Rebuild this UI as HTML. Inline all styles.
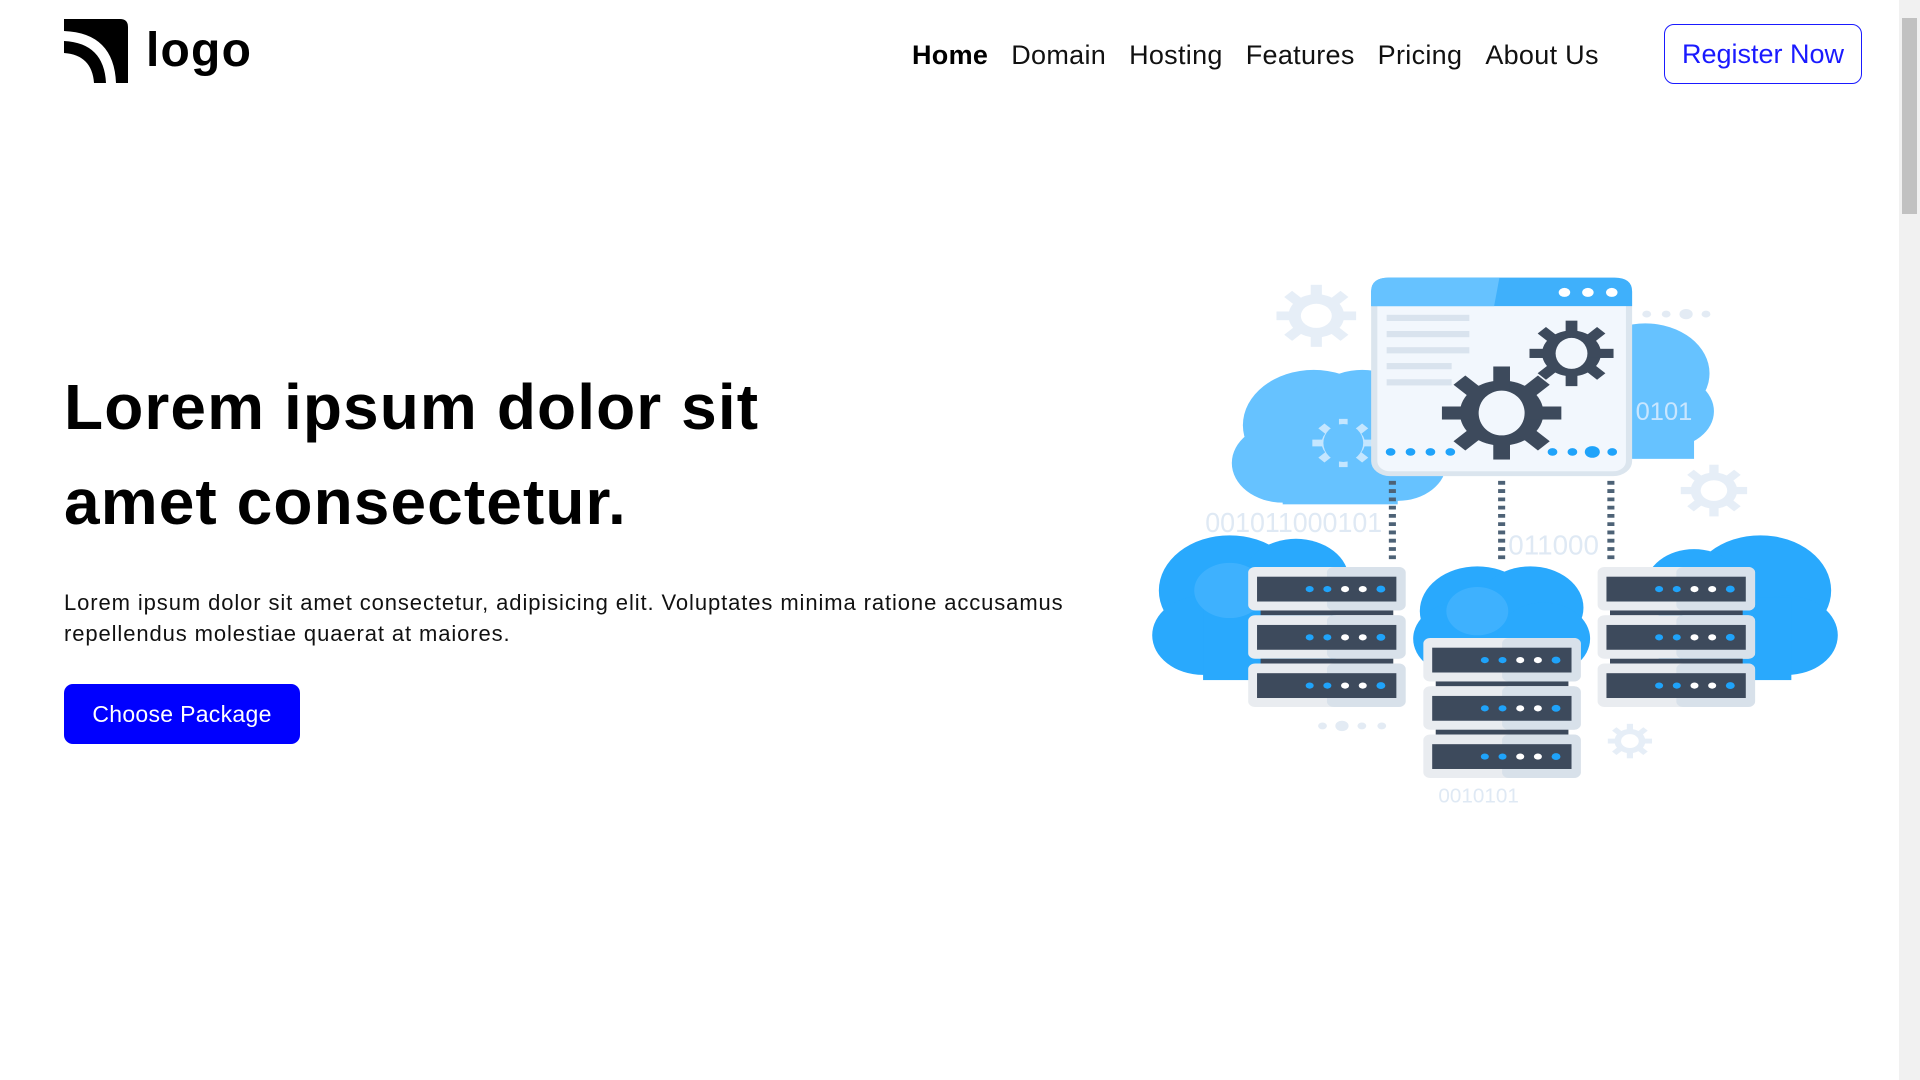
<!DOCTYPE html>
<html><head><meta charset="utf-8"><style>
*{margin:0;padding:0;box-sizing:border-box}
html,body{width:1920px;height:1080px;overflow:hidden;background:#fff;font-family:"Liberation Sans",sans-serif;color:#000}
.logo{position:absolute;left:64px;top:19px}
.logotxt{position:absolute;left:146px;top:23px;font-size:48px;font-weight:bold;letter-spacing:1.2px}
.nav{position:absolute;left:912px;top:40px;display:flex;font-size:27px;white-space:nowrap;letter-spacing:0.3px}
.nav span{margin-right:23px;color:#111}
.nav span.a{font-weight:bold;color:#000}
.reg{position:absolute;left:1664px;top:24px;width:198px;height:60px;border:1.5px solid #1a1aff;border-radius:10px;color:#1a1aff;font-size:27px;display:flex;align-items:center;justify-content:center}
h1{position:absolute;left:64px;top:360px;font-size:64px;line-height:95px;font-weight:bold;letter-spacing:1.1px}
p{position:absolute;left:64px;top:587px;font-size:22px;line-height:31px;color:#111;white-space:nowrap;letter-spacing:0.9px}
.btn{position:absolute;left:64px;top:684px;width:236px;height:60px;background:#0000ff;border-radius:9px;color:#fff;font-size:23px;display:flex;align-items:center;justify-content:center;letter-spacing:0.3px}
.sb{position:absolute;left:1899px;top:0;width:21px;height:1080px;background:#f1f1f1}
.sb i{position:absolute;left:3px;top:18px;width:15px;height:196px;background:#c1c1c1}
svg.ill{position:absolute;left:1150px;top:270px}
</style></head><body>
<svg class="logo" width="64" height="64" viewBox="0 0 64 64">
<path d="M0 0 H56 Q64 0 64 8 V64 H52 Q50 14 0 12 Z" fill="#000"/>
<path d="M0 22 Q40 24 42 64 H30 Q28 36 0 34 Z" fill="#000"/>
</svg>
<div class="logotxt">logo</div>
<div class="nav"><span class="a">Home</span><span>Domain</span><span>Hosting</span><span>Features</span><span>Pricing</span><span>About Us</span></div>
<div class="reg">Register Now</div>
<h1>Lorem ipsum dolor sit<br>amet consectetur.</h1>
<p>Lorem ipsum dolor sit amet consectetur, adipisicing elit. Voluptates minima ratione accusamus<br>repellendus molestiae quaerat at maiores.</p>
<div class="btn">Choose Package</div>
<div class="sb"><i></i></div>

<svg class="ill" width="690" height="540" viewBox="0 0 1560 1567" preserveAspectRatio="none">
<defs>
<g id="gear"><circle r="70"/><g id="t"><rect x="-14" y="-100" width="28" height="200"/><rect x="-100" y="-14" width="200" height="28"/></g><use href="#t" transform="rotate(45)"/></g>
</defs>
<g fill="#e6eef7">
<g transform="translate(376,133) scale(0.9)"><use href="#gear"/></g>
<g transform="translate(1275,640) scale(0.75)"><use href="#gear"/></g>
<g transform="translate(1085,1367) scale(0.5)"><use href="#gear"/></g>
</g>
<circle cx="376" cy="133" r="35" fill="#fff"/><circle cx="1275" cy="640" r="30" fill="#fff"/><circle cx="1085" cy="1367" r="20" fill="#fff"/>
<g fill="#e3ebf4"><circle cx="1123" cy="128" r="10"/><circle cx="1167" cy="128" r="10"/><circle cx="1212" cy="128" r="15"/><circle cx="1257" cy="128" r="10"/>
<circle cx="390" cy="1323" r="10"/><circle cx="434" cy="1323" r="15"/><circle cx="479" cy="1323" r="10"/><circle cx="524" cy="1323" r="10"/></g>
<g fill="#66c2ff">
<circle cx="370" cy="450" r="160"/><circle cx="480" cy="420" r="130"/><circle cx="300" cy="560" r="115"/><circle cx="560" cy="560" r="110"/><rect x="300" y="500" width="260" height="180"/>
<circle cx="1120" cy="300" r="145"/><circle cx="1170" cy="410" r="105"/><rect x="1080" y="300" width="150" height="248"/>
</g>
<g transform="translate(437,502) scale(0.7)" fill="#c4e6ff"><use href="#gear"/></g><ellipse cx="437" cy="502" rx="45" ry="55" fill="#66c2ff"/>
<g font-family="Liberation Sans,sans-serif" fill="#dfe9f4">
<text x="125" y="760" font-size="80" textLength="400" lengthAdjust="spacingAndGlyphs">001011000101</text>
<text x="810" y="825" font-size="80" textLength="205" lengthAdjust="spacingAndGlyphs">011000</text>
<text x="652" y="1545" font-size="58" textLength="182" lengthAdjust="spacingAndGlyphs">0010101</text>
<text x="1098" y="435" font-size="72" fill="#c8e6ff" textLength="128" lengthAdjust="spacingAndGlyphs">0101</text>
</g>
<rect x="507" y="29" width="576" height="562" rx="36" fill="#f2f7fd" stroke="#dbe5ee" stroke-width="14"/>
<path d="M540 22 H1050 Q1090 22 1090 62 V105 H500 V62 Q500 22 540 22Z" fill="#3fb0fb"/>
<path d="M540 22 H790 L778 105 H500 V62 Q500 22 540 22Z" fill="#66c2ff"/>
<g fill="#fff"><circle cx="937" cy="65" r="13"/><circle cx="990" cy="65" r="13"/><circle cx="1044" cy="65" r="13"/></g>
<g fill="#d9e3ee"><rect x="535" y="130" width="187" height="18"/><rect x="535" y="177" width="187" height="18"/><rect x="535" y="224" width="187" height="18"/><rect x="535" y="270" width="147" height="18"/><rect x="535" y="317" width="147" height="18"/></g>
<g fill="#3d4a5c">
<g transform="translate(795,415) scale(1.35)"><use href="#gear"/></g>
<g transform="translate(953,242) scale(0.95)"><use href="#gear"/></g>
</g>
<ellipse cx="795" cy="415" rx="52" ry="65" fill="#f2f7fd"/><ellipse cx="953" cy="242" rx="36" ry="45" fill="#f2f7fd"/>
<g fill="#1fa3fa"><circle cx="544" cy="528" r="11"/><circle cx="589" cy="528" r="11"/><circle cx="634" cy="528" r="11"/><circle cx="679" cy="528" r="11"/><circle cx="910" cy="528" r="11"/><circle cx="955" cy="528" r="11"/><circle cx="1000" cy="528" r="17"/><circle cx="1045" cy="528" r="11"/></g>
<g stroke="#4d6276" stroke-width="16" stroke-dasharray="11 13"><line x1="548" y1="612" x2="548" y2="852"/><line x1="795" y1="612" x2="795" y2="852"/><line x1="1042" y1="612" x2="1042" y2="852"/></g>
<g fill="#29a9fd">
<circle cx="180" cy="930" r="160"/><circle cx="330" cy="900" r="120"/><circle cx="120" cy="1060" r="115"/><rect x="120" y="950" width="300" height="240"/>
<circle cx="1380" cy="930" r="160"/><circle cx="1230" cy="920" r="110"/><circle cx="1440" cy="1060" r="115"/><rect x="1150" y="950" width="300" height="240"/>
<circle cx="740" cy="990" r="130"/><circle cx="860" cy="980" r="120"/><circle cx="700" cy="1070" r="105"/><circle cx="890" cy="1070" r="105"/>
</g>
<g fill="#4db8ff" opacity="0.6"><circle cx="180" cy="930" r="80"/><circle cx="740" cy="990" r="70"/></g>
<g id="srv">
<g id="u"><rect x="222" y="862" width="356" height="126" rx="16" fill="#e9ecf0"/><rect x="400" y="862" width="178" height="126" rx="16" fill="#d8e1ea"/><rect x="242" y="890" width="315" height="72" fill="#3d4a5c"/>
<circle cx="361" cy="926" r="9" fill="#1fa3fa"/><circle cx="401" cy="926" r="9" fill="#1fa3fa"/><circle cx="441" cy="926" r="9" fill="#fff"/><circle cx="481" cy="926" r="9" fill="#fff"/><circle cx="522" cy="926" r="10" fill="#1fa3fa"/></g>
<rect x="250" y="988" width="300" height="14" fill="#3d4a5c"/>
<use href="#u" transform="translate(0,140)"/>
<rect x="250" y="1128" width="300" height="14" fill="#3d4a5c"/>
<use href="#u" transform="translate(0,280)"/>
</g>
<use href="#srv" transform="translate(790,0)"/>
<use href="#srv" transform="translate(396,206)"/>
</svg>
</body></html>
